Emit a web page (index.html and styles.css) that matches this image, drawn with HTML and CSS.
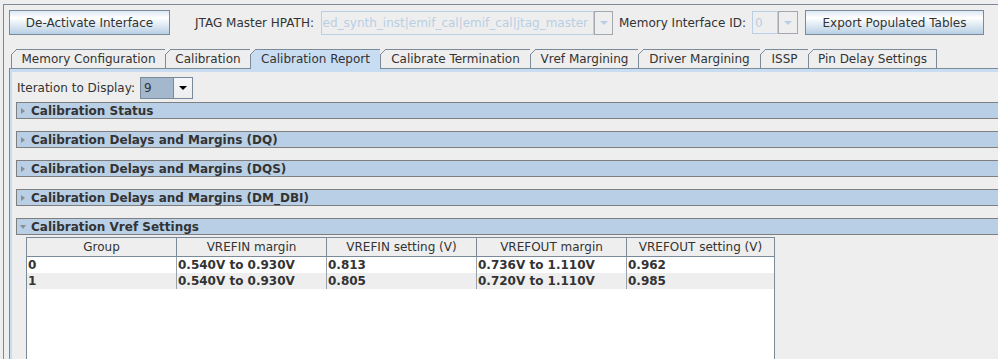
FILE: index.html
```html
<!DOCTYPE html>
<html lang="en">
<head>
    <meta charset="UTF-8">
    <title>EMIF Debug Toolkit</title>
    <link rel="stylesheet" href="styles.css">
</head>
<body>
    <div class="frame">
        <!-- Top toolbar -->
        <div class="toolbar">
            <button class="btn btn-deactivate">De-Activate Interface</button>
            <span class="label label-hpath">JTAG Master HPATH:</span>
            <div class="combo combo-hpath disabled">
                <div class="combo-text">ed_synth_inst|emif_cal|emif_cal|jtag_master</div>
                <div class="combo-arrow"><span class="arrow"></span></div>
            </div>
            <span class="label label-id">Memory Interface ID:</span>
            <div class="combo combo-id disabled">
                <div class="combo-text">0</div>
                <div class="combo-arrow"><span class="arrow"></span></div>
            </div>
            <button class="btn btn-export">Export Populated Tables</button>
        </div>

        <!-- Tabs -->
        <div class="tabs">
            <div class="tab tab-mem">Memory Configuration</div>
            <div class="tab tab-cal">Calibration</div>
            <div class="tab tab-report selected">Calibration Report</div>
            <div class="tab tab-term">Calibrate Termination</div>
            <div class="tab tab-vref">Vref Margining</div>
            <div class="tab tab-driver">Driver Margining</div>
            <div class="tab tab-issp">ISSP</div>
            <div class="tab tab-pin">Pin Delay Settings</div>
        </div>

        <div class="tab-body">
            <div class="tab-inner">
                <div class="iter-row">
                    <span class="iter-label">Iteration to Display:</span>
                    <div class="combo combo-iter">
                        <div class="combo-text">9</div>
                        <div class="combo-arrow"><span class="arrow"></span></div>
                    </div>
                </div>

                <div class="section"><span class="caret"></span>Calibration Status</div>
                <div class="section"><span class="caret"></span>Calibration Delays and Margins (DQ)</div>
                <div class="section"><span class="caret"></span>Calibration Delays and Margins (DQS)</div>
                <div class="section"><span class="caret"></span>Calibration Delays and Margins (DM_DBI)</div>
                <div class="section open"><span class="caret"></span>Calibration Vref Settings</div>

                <div class="table-view">
                    <table class="vref-table">
                        <thead>
                            <tr>
                                <th>Group</th>
                                <th>VREFIN margin</th>
                                <th>VREFIN setting (V)</th>
                                <th>VREFOUT margin</th>
                                <th>VREFOUT setting (V)</th>
                            </tr>
                        </thead>
                        <tbody>
                            <tr>
                                <td>0</td>
                                <td>0.540V to 0.930V</td>
                                <td>0.813</td>
                                <td>0.736V to 1.110V</td>
                                <td>0.962</td>
                            </tr>
                            <tr>
                                <td>1</td>
                                <td>0.540V to 0.930V</td>
                                <td>0.805</td>
                                <td>0.720V to 1.110V</td>
                                <td>0.985</td>
                            </tr>
                        </tbody>
                    </table>
                </div>
            </div>
        </div>
    </div>
</body>
</html>
```

FILE: styles.css
```css
/* Base */
* {
    margin: 0;
    padding: 0;
    box-sizing: border-box;
}

body {
    background-color: #eeeeee;
    font-family: "DejaVu Sans", sans-serif;
    font-size: 12px;
    color: #333;
    height: 359px;
    overflow: hidden;
}

/* Outer frame */
.frame {
    margin: 4px 0 0 3px;
    height: 355px;
    border-top: 1px solid #7a8a99;
    border-left: 1px solid #7a8a99;
    padding: 5px 0 0 5px;
    display: flex;
    flex-direction: column;
}

/* Toolbar */
.toolbar {
    display: flex;
    align-items: center;
    height: 25px;
}

.btn {
    height: 25px;
    border: 1px solid #7a8a99;
    background: linear-gradient(#dde8f3, #ffffff 30%, #b8cfe5);
    font-family: "DejaVu Sans", sans-serif;
    font-size: 12px;
    color: #333;
}

.btn-deactivate {
    width: 161px;
}

.btn-export {
    width: 179px;
    margin-left: 7px;
}

.label {
    white-space: nowrap;
}

.label-hpath {
    width: 126px;
    margin-left: 25px;
}

.label-id {
    width: 133px;
    margin-left: 6px;
}

/* Combo boxes */
.combo {
    display: flex;
    height: 24px;
}

.combo-text {
    flex: 1;
    border: 1px solid #7a8a99;
    display: flex;
    align-items: center;
    padding-left: 2px;
    overflow: hidden;
    white-space: nowrap;
}

.combo-arrow {
    width: 19px;
    border: 1px solid #7a8a99;
    border-left: none;
    background: linear-gradient(#f4f6f9, #eeeeee);
    display: flex;
    align-items: center;
    justify-content: center;
}

.arrow {
    width: 0;
    height: 0;
    border-left: 4px solid transparent;
    border-right: 4px solid transparent;
    border-top: 4px solid #000;
}

.combo.disabled .combo-text {
    border-color: #b8cfe5;
    color: #b8cfe5;
}

.combo.disabled .combo-arrow {
    border-color: #a3a8ae;
    border-left: 1px solid #a3a8ae;
    background: #eeeeee;
}

.combo.disabled .arrow {
    border-top-color: #b8cfe5;
}

.combo-hpath {
    width: 292px;
}

.combo-hpath .combo-text {
    justify-content: flex-end;
    padding-right: 5px;
}

.combo-id {
    width: 46px;
    height: 23px;
}

.combo-id .combo-arrow {
    width: 20px;
}

.combo-iter {
    width: 53px;
    height: 22px;
}

.combo-iter .combo-text {
    background-color: #a3b8cc;
    padding-left: 3px;
}

/* Tabs */
.tabs {
    display: flex;
    align-items: flex-start;
    margin-top: 14px;
    padding-left: 2px;
}

.tab {
    position: relative;
    height: 19px;
    border-top: 1px solid #7a8a99;
    border-left: 1px solid #7a8a99;
    display: flex;
    align-items: center;
    justify-content: center;
    white-space: nowrap;
}

.tab::before {
    content: "";
    position: absolute;
    left: -1px;
    top: -1px;
    width: 6px;
    height: 6px;
    background: linear-gradient(to bottom right, #eeeeee 0 calc(50% - 0.7px), #7a8a99 calc(50% - 0.7px) calc(50% + 0.7px), transparent calc(50% + 0.7px));
}

.tab.selected {
    height: 20px;
    margin-bottom: -1px;
    padding-bottom: 1px;
    background-color: #c8ddf2;
    z-index: 1;
}

.tab-mem { width: 154px; }
.tab-cal { width: 85px; }
.tab-report { width: 130px; }
.tab-term { width: 150px; }
.tab-vref { width: 108px; }
.tab-driver { width: 122px; }
.tab-issp { width: 48px; }
.tab-pin {
    width: 129px;
    border-right: 1px solid #7a8a99;
}

/* Tab content */
.tab-body {
    flex: 1;
    border-top: 1px solid #7a8a99;
    border-left: 1px solid #7a8a99;
    min-height: 0;
}

.tab-inner {
    height: 100%;
    border-top: 3px solid #c8ddf2;
    border-left: 2px solid #c8ddf2;
    padding: 5px 0 0 4px;
    display: flex;
    flex-direction: column;
}

.iter-row {
    display: flex;
    align-items: center;
    height: 22px;
    padding-left: 1px;
}

.iter-label {
    width: 123px;
    white-space: nowrap;
}

/* Collapsible section headers */
.section {
    height: 17px;
    margin-top: 12px;
    border: 1px solid #7f7f7f;
    border-right: none;
    background-color: #b8cfe5;
    display: flex;
    align-items: center;
    font-weight: bold;
    white-space: nowrap;
}

.iter-row + .section {
    margin-top: 3px;
}

.caret {
    width: 0;
    height: 0;
    margin: 0 6px 0 4px;
    border-top: 3.5px solid transparent;
    border-bottom: 3.5px solid transparent;
    border-left: 4px solid #8a8f96;
}

.section.open .caret {
    margin: 0 5px 0 3px;
    border-left: 3.5px solid transparent;
    border-right: 3.5px solid transparent;
    border-top: 4px solid #8a8f96;
    border-bottom: none;
}

/* Vref table */
.table-view {
    flex: 1;
    width: 749px;
    margin: 2px 0 0 10px;
    background-color: #fff;
    border-left: 1px solid #7a8a99;
    border-right: 1px solid #7a8a99;
}

.vref-table {
    width: 747px;
    table-layout: fixed;
    border-collapse: separate;
    border-spacing: 0;
}

.vref-table th {
    width: 150px;
    line-height: 18px;
    background-color: #eeeeee;
    border-top: 1px solid #7a8a99;
    border-bottom: 1px solid #7a8a99;
    border-right: 1px solid #7a8a99;
    font-weight: normal;
    text-align: center;
}

.vref-table th:last-child {
    width: 147px;
    border-right: none;
}

.vref-table td {
    line-height: 16px;
    padding-left: 1px;
    border-right: 1px solid #9aa4ae;
    font-weight: bold;
    white-space: nowrap;
}

.vref-table td:last-child {
    border-right: none;
}

.vref-table tbody tr:nth-child(even) td {
    background-color: #eeeeee;
}
```
